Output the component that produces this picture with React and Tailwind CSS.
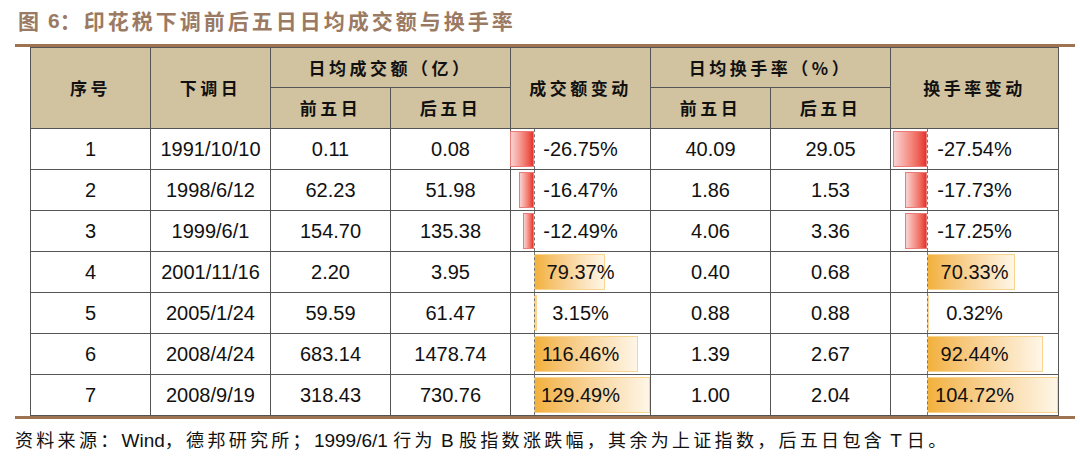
import React from "react";

const rows = [
  ["1", "1991/10/10", "0.11", "0.08", -26.75, "40.09", "29.05", -27.54],
  ["2", "1998/6/12", "62.23", "51.98", -16.47, "1.86", "1.53", -17.73],
  ["3", "1999/6/1", "154.70", "135.38", -12.49, "4.06", "3.36", -17.25],
  ["4", "2001/11/16", "2.20", "3.95", 79.37, "0.40", "0.68", 70.33],
  ["5", "2005/1/24", "59.59", "61.47", 3.15, "0.88", "0.88", 0.32],
  ["6", "2008/4/24", "683.14", "1478.74", 116.46, "1.39", "2.67", 92.44],
  ["7", "2008/9/19", "318.43", "730.76", 129.49, "1.00", "2.04", 104.72],
];

const cjk = { fontFamily: '"Noto Sans CJK SC", sans-serif' };
const num = { fontFamily: '"Liberation Sans", Arial, sans-serif' };

// data bar cell, axis = px from the cell's left edge, scale = px per 1%
const BarCell = ({ value, axis, scale }) => {
  const w = Math.abs(value) * scale;
  const neg = value < 0;
  return (
    <td className="border border-[#555] p-0">
      <div className="relative h-[40px] flex items-center justify-center">
        <div
          className={
            neg
              ? "absolute top-[2px] bottom-[2px] border border-[#e97b78] bg-gradient-to-r from-[#f7d3d3] to-[#e5302c]"
              : "absolute top-[2px] bottom-[2px] border border-[#f8d48f] bg-gradient-to-r from-[#f2b13a] to-[#fef6e7]"
          }
          style={neg ? { left: axis - w, width: w } : { left: axis, width: w }}
        />
        <div
          className="absolute top-0 bottom-0 border-l border-dashed border-[#777]"
          style={{ left: axis }}
        />
        <span className="relative text-[20px] text-[#111]" style={num}>
          {value.toFixed(2) + "%"}
        </span>
      </div>
    </td>
  );
};

const Th = ({ children, ...rest }) => (
  <th
    className="border border-[#555] bg-[#d1c3a0] text-[17px] font-bold tracking-[3.5px] text-[#111] p-0"
    style={cjk}
    {...rest}
  >
    {children}
  </th>
);

const Td = ({ children }) => (
  <td className="border border-[#555] p-0 text-center text-[20px] text-[#111]" style={num}>
    {children}
  </td>
);

export default function App() {
  return (
    <div className="w-[1080px] h-[457px] bg-white overflow-hidden">
      <div className="h-[44px] pl-[18px] pt-[5px] flex items-start text-[21px] text-[#9b7a63] tracking-[3px]" style={cjk}>
        <span className="font-bold">图</span>
        <span className="font-bold ml-[6px] tracking-normal" style={num}>6</span>
        <span className="font-bold">：印花税下调前后五日日均成交额与换手率</span>
      </div>
      <div className="ml-[15px] w-[1060px] h-[3px] bg-[#9e7352]" />
      <table className="ml-[30px] w-[1028px] table-fixed border-collapse">
        <colgroup>
          <col className="w-[120px]" />
          <col className="w-[120px]" />
          <col className="w-[120px]" />
          <col className="w-[120px]" />
          <col className="w-[140px]" />
          <col className="w-[120px]" />
          <col className="w-[120px]" />
          <col className="w-[168px]" />
        </colgroup>
        <thead>
          <tr className="h-[40px]">
            <Th rowSpan={2}>序号</Th>
            <Th rowSpan={2}>下调日</Th>
            <Th colSpan={2}>日均成交额（亿）</Th>
            <Th rowSpan={2}>成交额变动</Th>
            <Th colSpan={2}>日均换手率（%）</Th>
            <Th rowSpan={2}>换手率变动</Th>
          </tr>
          <tr className="h-[41px]">
            <Th>前五日</Th>
            <Th>后五日</Th>
            <Th>前五日</Th>
            <Th>后五日</Th>
          </tr>
        </thead>
        <tbody>
          {rows.map((r) => (
            <tr key={r[0]} className="h-[41px]">
              <Td>{r[0]}</Td>
              <Td>{r[1]}</Td>
              <Td>{r[2]}</Td>
              <Td>{r[3]}</Td>
              <BarCell value={r[4]} axis={23} scale={0.896} />
              <Td>{r[5]}</Td>
              <Td>{r[6]}</Td>
              <BarCell value={r[7]} axis={36} scale={1.25} />
            </tr>
          ))}
        </tbody>
      </table>
      <div className="ml-[15px] w-[1060px] h-[3px] bg-[#9e7352]" />
      <div className="pl-[15px] pt-[7px] text-[18px] tracking-[3.3px] text-[#111] whitespace-nowrap" style={cjk}>
        资料来源：<span className="text-[19px] tracking-normal" style={num}>Wind</span>，德邦研究所；
        <span className="text-[19px] tracking-normal" style={num}>1999/6/1 </span>行为
        <span className="text-[19px] tracking-normal" style={num}> B </span>股指数涨跌幅，其余为上证指数，后五日包含
        <span className="text-[19px] tracking-normal" style={num}> T </span>日。
      </div>
    </div>
  );
}
